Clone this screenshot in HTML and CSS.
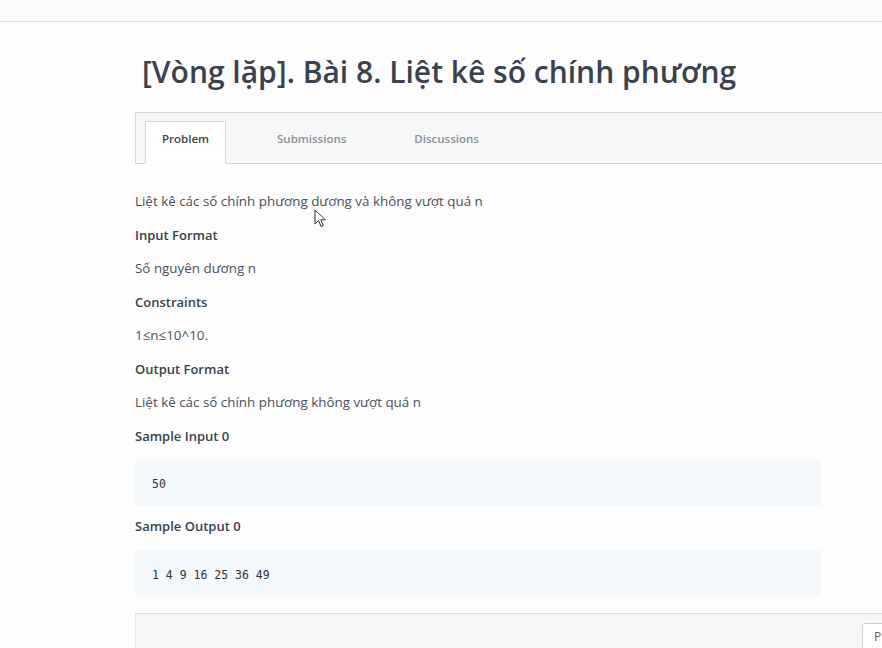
FILE: index.html
```html
<!DOCTYPE html>
<html lang="vi">
<head>
<meta charset="utf-8">
<title>Liệt kê số chính phương</title>
<link rel="stylesheet" href="styles.css">
</head>
<body>
<header class="topbar"></header>
<main class="page">
  <h1 class="title">[Vòng lặp]. Bài 8. Liệt kê số chính phương</h1>
  <nav class="tabs">
    <a class="tab active">Problem</a>
    <a class="tab">Submissions</a>
    <a class="tab">Discussions</a>
  </nav>
  <section class="content">
    <p class="txt">Liệt kê các số chính phương dương và không vượt quá n</p>
    <p class="head">Input Format</p>
    <p class="txt">Số nguyên dương n</p>
    <p class="head">Constraints</p>
    <p class="txt">1≤n≤10^10.</p>
    <p class="head">Output Format</p>
    <p class="txt">Liệt kê các số chính phương không vượt quá n</p>
    <p class="head">Sample Input 0</p>
    <pre class="code">50</pre>
    <p class="head">Sample Output 0</p>
    <pre class="code">1 4 9 16 25 36 49</pre>
  </section>
  <div class="editor">
    <span class="lang">P</span>
  </div>
</main>
<svg class="cursor" width="13" height="19" viewBox="0 0 13 19">
  <path d="M1 1 L1 15 L4.5 11.5 L7 17.5 L9.2 16.6 L6.8 10.8 L11.5 10.8 Z" fill="#fff" stroke="#333" stroke-width="1" stroke-linejoin="round"/>
</svg>
</body>
</html>
```
FILE: styles.css
```css
html, body {
  margin: 0;
  padding: 0;
  background: #fdfdfd;
  overflow: hidden;
  height: 648px;
}
body {
  font-family: "Open Sans", "Noto Sans", sans-serif;
  color: #39424e;
  position: relative;
}
.topbar {
  height: 21px;
  border-bottom: 1px solid #dcdcdc;
  background: #fcfcfc;
}
.page {
  padding-left: 135px;
}
.title {
  margin: 30px 0 0 7px;
  font-size: 30px;
  line-height: 40px;
  font-weight: 600;
  color: #39424e;
  white-space: nowrap;
}
.tabs {
  margin-top: 20px;
  width: 900px;
  height: 52px;
  box-sizing: border-box;
  border: 1px solid #d6d6d6;
  border-right: none;
  background: #f6f7f8;
  display: flex;
  align-items: flex-end;
  gap: 34px;
  padding-left: 9px;
}
.tab {
  font-size: 11.5px;
  color: #8a8f96;
  font-weight: 600;
  padding: 0 17px;
  height: 42px;
  line-height: 34px;
  box-sizing: border-box;
  margin-bottom: -1px;
}
.tab.active {
  background: #fff;
  border: 1px solid #d6d6d6;
  border-bottom: 1px solid #fff;
  color: #39424e;
  padding: 0 16px;
  height: 43px;
}
.content {
  width: 686px;
  padding-top: 27px;
}
.txt, .head {
  margin: 0 0 13.5px;
  font-size: 13.4px;
  line-height: 20px;
  color: #4a5059;
}
.head {
  font-size: 13px;
  font-weight: 600;
  color: #39424e;
}
.code {
  margin: 1px 0 10px;
  background: #f3f8fc;
  height: 47px;
  box-sizing: border-box;
  padding: 4px 17px 0;
  line-height: 42px;
  font-family: "DejaVu Sans Mono", "Liberation Mono", monospace;
  font-size: 11.5px;
  color: #333;
}
.content .code:last-child {
  margin-bottom: 16px;
}
.editor {
  width: 900px;
  height: 60px;
  border-top: 1px solid #dcdcdc;
  border-left: 1px solid #e6e6e6;
  background: #f6f6f6;
  padding: 9px 0 0 726px;
  box-sizing: border-box;
}
.lang {
  display: inline-block;
  width: 40px;
  height: 28px;
  box-sizing: border-box;
  background: #fff;
  border: 1px solid #d0d0d0;
  border-radius: 3px;
  font-size: 12px;
  line-height: 26px;
  padding-left: 11px;
  color: #7a4a5a;
}
.cursor {
  position: absolute;
  left: 314px;
  top: 209px;
}
```
